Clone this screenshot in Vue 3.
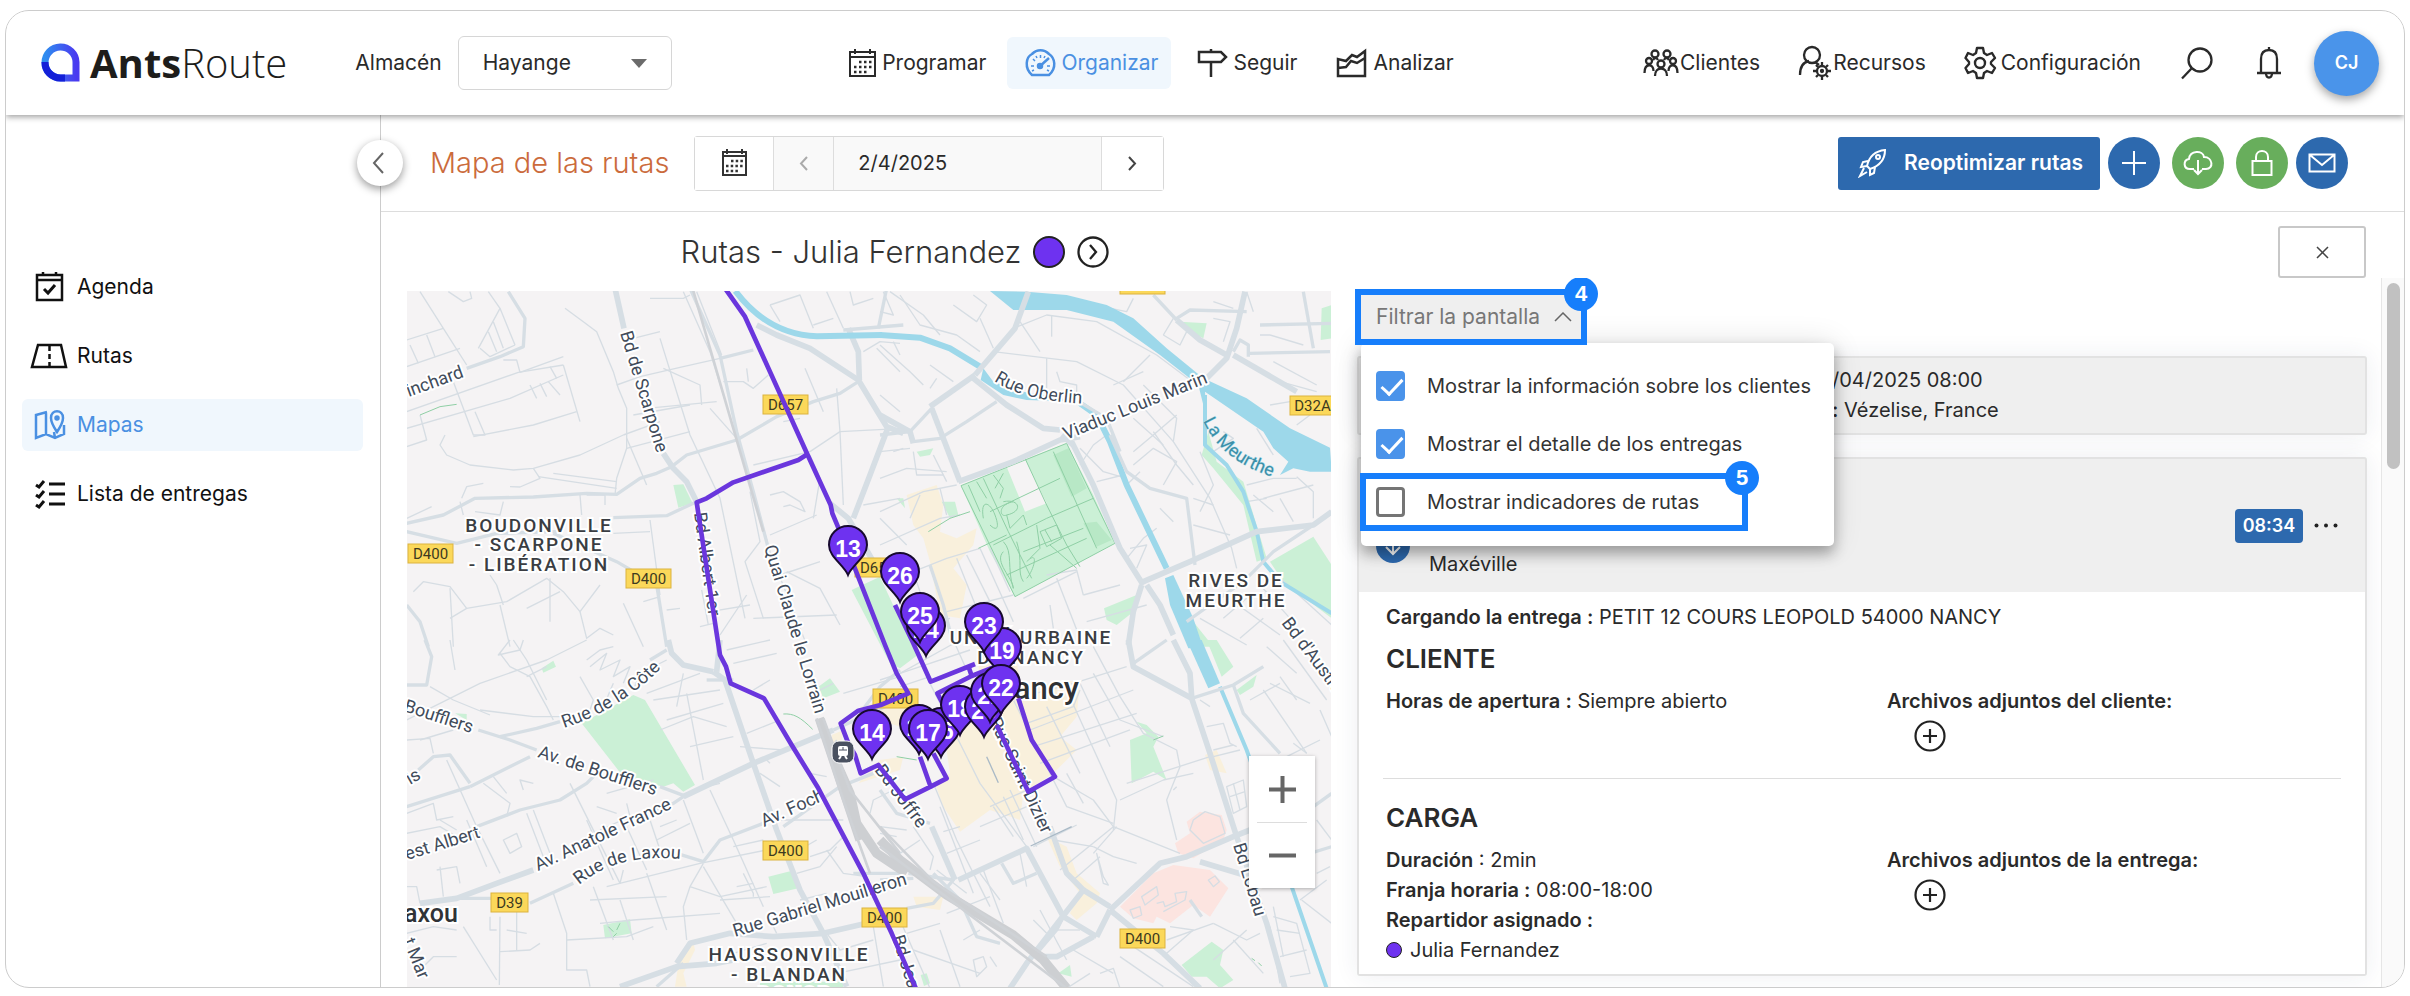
<script setup>
import { ref } from 'vue'

const depot = ref('Hayange')
const date = ref('2/4/2025')
const filters = ref([
  { id: 'f-clients', label: 'Mostrar la información sobre los clientes', on: true },
  { id: 'f-details', label: 'Mostrar el detalle de los entregas', on: true },
  { id: 'f-metrics', label: 'Mostrar indicadores de rutas', on: false, step: 5 },
])

// The base map is drawn in four sectors, each with its own origin, at three units per pixel.
const sectors = [
  {
    id: 'nw', at: 'translate(-21 -18)',
    major: [
      'M645 10 L672 130', 'M790 505 L820 550 L860 590 L890 650', 'M1070 120 L1130 150 L1230 190 L1375 285 L1460 425 L1510 445', 'M1465 425 L1410 570 L1360 700', 'M1290 655 L1345 700 L1420 830', 'M1345 130 L1375 200 L1378 285',
    ],
    mid: [
      'M870 10 L960 210 L1010 440 L1060 620 L1105 790', 'M20 715 L130 690 L225 640 L400 636 L560 625 L650 628 L720 580 L770 565 L815 545', 'M815 545 L860 510 L1010 465 L1130 395 L1240 350 L1320 325 L1375 290', 'M890 650 L800 692 L640 698', 'M20 740 L170 775 L290 745 L470 740', 'M200 250 L300 215 L370 185 L375 100 L325 20', 'M960 220 L1060 195', 'M460 745 L650 830 L770 900 L800 1085', 'M20 960 L60 1010 L85 1085', 'M1460 10 L1435 130', 'M1330 135 L1510 120',
    ],
    minor: [
      'M60 20 L130 130 L200 240', 'M20 165 L130 130', 'M20 245 L180 190', 'M145 20 L190 50 L215 40 L210 20', 'M30 180 L55 235', 'M80 150 L105 215', 'M235 190 L300 70 L265 20', 'M240 190 L270 215 L345 180', 'M265 140 L290 200', 'M280 110 L310 190', 'M300 70 L345 180', 'M310 225 L350 225 L360 262 L490 215', 'M490 240 L540 410', 'M20 485 L80 465 L60 390', 'M20 380 L355 262 L490 240', 'M20 430 L330 340 L490 270', 'M160 290 L220 450 L255 450 L225 380', 'M220 455 L400 420 L530 380', 'M390 300 L410 340', 'M420 295 L440 335', 'M445 290 L480 330', 'M450 245 L470 280', 'M135 450 L120 480 L140 510 L210 540 L340 555 L400 550 L540 510 L670 450', 'M495 70 L550 110 L590 140 L640 260 L655 310 L680 370 L680 490 L650 580 L645 630', 'M650 300 L720 275 L850 245 L960 220', 'M700 160 L780 140', 'M680 490 L870 440', 'M670 450 L780 410', 'M780 160 L870 450 L960 640 L1035 1000', 'M850 20 L930 200 L1060 620 L1110 800 L1220 1080', 'M890 20 L965 210', 'M740 370 L950 350', 'M700 390 L870 360', 'M790 250 L900 300 L905 360', 'M970 290 L1030 290 L1060 310 L1105 270', 'M1040 250 L1045 290', 'M930 370 L1010 460', 'M680 460 L740 600', 'M400 550 L420 580 L360 606 L330 605', 'M415 575 L650 610', 'M460 565 L650 590', 'M185 640 L200 605 L250 595', 'M180 650 L190 690', 'M310 650 L300 690 L225 680', 'M540 630 L545 690', 'M560 630 L615 630 L615 660', 'M20 700 L95 665', 'M640 745 L750 740', 'M750 705 L780 930', 'M40 920 L70 890 L150 905 L200 970 L150 1000', 'M200 970 L320 950 L440 880 L490 920 L540 980 L600 900', 'M150 910 L160 1085', 'M310 960 L290 900 L270 870', 'M450 880 L450 1010', 'M480 920 L380 970', 'M540 980 L560 1060 L600 1030 L640 1050', 'M300 960 L330 1085', 'M670 955 L730 1085', 'M730 950 L780 935', 'M800 975 L840 970', 'M900 1025 L940 1015', 'M905 915 L925 1020', 'M930 980 L1050 960', 'M960 1050 L1040 930', 'M1050 620 L1080 770 L1035 830 L1090 1000', 'M1110 750 L1250 690', 'M1140 870 L1260 830', 'M1160 860 L1260 910 L1320 1020', 'M1060 540 L1230 500', 'M1230 510 L1260 580 L1240 700', 'M1110 630 L1150 620 L1200 650 L1215 680 L1170 660 L1150 665', 'M1060 1000 L1310 990', 'M1230 500 L1320 440 L1510 430', 'M1320 440 L1310 310', 'M1320 440 L1330 660', 'M1150 410 L1200 400', 'M1215 250 L1270 380', 'M1110 60 L1200 30 L1240 130', 'M1110 60 L1140 110', 'M1280 20 L1330 130', 'M1240 120 L1300 100', 'M1350 20 L1360 60 L1420 40', 'M1390 200 L1440 170 L1500 175', 'M1430 190 L1500 260', 'M750 40 L850 40 L870 30', 'M1390 660 L1500 640', 'M1480 500 L1510 490',
    ],
    rail: ['M880 18 L1090 740'],
    green: ['M820 600 L850 598 L878 655 L835 668 Z'],
    park: ['M60 390 L120 365 L170 358'],
  },
  {
    id: 'ne', at: 'translate(1419 -18)',
    major: [
      'M445 20 L405 130 L285 270', 'M285 270 L150 365', 'M280 280 L380 360 L490 430 L540 435', 'M235 590 L400 530 L540 465 L600 455', 'M575 470 L640 600 L720 790 L790 900', 'M545 450 L580 480', 'M0 390 L90 440 L100 475', 'M155 370 L240 590', 'M960 300 L1040 220 L1070 130 L1095 20', 'M1040 210 L960 165 L890 105', 'M1060 210 L1250 320', 'M790 890 L930 830 L1130 740 L1300 720 L1355 680', 'M785 900 L760 980 L745 1080', 'M800 900 L840 960 L880 1050',
    ],
    mid: [
      'M100 470 L180 460 L260 410 L350 350', 'M890 105 L820 30', 'M90 440 L155 370', 'M0 450 L90 440', 'M890 100 L930 75 L1100 80', 'M1110 205 L1350 200', 'M690 450 L740 560 L810 610 L920 640 L945 840', 'M580 340 L680 400 L720 500', 'M1060 200 L1080 165 L1105 180 L1105 215', 'M1140 120 L1355 115', 'M1270 20 L1300 190', 'M150 840 L190 960 L220 1080', 'M1300 720 L1180 800 L1090 890 L990 960 L920 1010',
    ],
    minor: [
      'M0 80 L40 90 L10 20', 'M30 20 L130 90 L180 150', 'M60 30 L120 120 L230 150 L300 200', 'M220 60 L290 110 L320 60 L280 30', 'M300 100 L340 190', 'M400 130 L500 90 L650 110 L830 210 L950 300', 'M340 200 L590 230 L730 300 L880 470 L990 640 L1055 790 L1070 850', 'M480 200 L420 110', 'M500 220 L500 320', 'M530 260 L540 290 L590 300 L590 350', 'M515 90 L515 155', 'M730 290 L810 210', 'M700 300 L790 260', 'M760 400 L850 480', 'M150 240 L220 290', 'M170 280 L150 310', 'M0 330 L60 380', 'M40 170 L60 210', 'M0 180 L90 260 L130 300', 'M100 500 L110 570 L190 570', 'M160 510 L200 590', 'M0 500 L90 490', 'M0 580 L80 550 L200 560', 'M0 700 L80 780', 'M0 680 L130 620 L230 600', 'M0 780 L180 700 L240 690', 'M120 630 L90 700', 'M180 610 L200 690', 'M30 820 L100 860 L200 820 L300 790', 'M100 860 L140 980', 'M260 810 L330 950', 'M300 790 L400 1010', 'M230 820 L290 970', 'M330 790 L390 920', 'M200 980 L400 930', 'M180 1010 L210 1000', 'M600 490 L670 560 L740 580', 'M600 540 L640 480 L680 450', 'M650 590 L730 570', 'M760 540 L820 490 L890 530 L850 600', 'M740 600 L780 560', 'M890 390 L820 450 L760 500', 'M820 440 L890 540 L940 600', 'M790 300 L890 400 L880 470', 'M960 500 L1000 600 L960 680', 'M840 670 L880 710', 'M750 790 L800 780 L770 850', 'M740 820 L790 760 L830 730', 'M940 640 L1000 660', 'M940 720 L1050 750', 'M500 870 L590 855 L610 930', 'M530 880 L600 1060', 'M610 930 L720 900', 'M430 940 L590 860', 'M510 960 L520 1030', 'M620 1010 L800 960', 'M850 150 L900 180 L920 140', 'M850 150 L880 100', 'M1000 100 L1050 110 L1030 170', 'M1100 20 L1120 80', 'M1140 150 L1170 150 L1270 180', 'M1180 230 L1310 300', 'M1200 290 L1310 320', 'M1170 360 L1230 350', 'M1250 420 L1290 390', 'M1100 600 L1180 580 L1250 580', 'M1250 575 L1300 620 L1300 700', 'M1120 630 L1180 680', 'M1150 640 L1300 600', 'M1200 640 L1240 710', 'M1100 650 L1160 640', 'M1000 500 L1060 460 L1030 440', 'M1130 430 L1180 510', 'M960 1000 L1100 1080', 'M1030 1000 L1100 940', 'M1060 950 L1200 1050', 'M1140 900 L1230 1000', 'M1190 870 L1355 1020', 'M1080 1060 L1150 1000', 'M640 60 L740 80 L760 40', 'M1000 50 L1060 70',
    ],
    water: ['M0 150 L120 158 L210 190 L300 245', 'M600 355 L650 390 L690 470 L740 600 L860 850'],
    stream: ['M975 330 L975 480 L1040 540 L1090 620 L1130 740 L1150 830 L1200 890 L1355 985'],
    waterFill: [
      'M330 18 L440 20 L560 30 L680 60 L760 100 L860 190 L970 280 L1100 340 L1230 430 L1350 488 L1355 560 L1290 560 L1240 550 L1200 570 L1225 530 L1180 490 L1150 440 L975 320 L980 400 L955 300 L840 210 L700 110 L560 75 L400 75 Z',
      'M310 250 L340 290 L430 320 L600 350 L440 345 L370 330 L302 285 Z',
      'M855 880 L880 870 L940 1000 L970 1090 L925 1090 L870 960 Z',
    ],
    green: [
      'M243 602 L380 545 L560 475 L640 630 L705 775 L405 935 L330 800 Z', 'M900 110 L980 115 L970 160 L920 135 Z', 'M1325 70 L1355 60 L1355 160 L1322 165 Z', 'M985 440 L1010 530 L1090 590 L1160 820 L1130 830 L1090 660 L1000 550 L965 510 Z', 'M1170 830 L1300 755 L1355 840 L1355 1000 L1210 890 Z', 'M672 970 L770 930 L760 980 L710 1020 L680 1005 Z', 'M185 650 L225 650 L235 690 L210 700 Z', 'M110 500 L160 490 L150 510 L120 515 Z', 'M50 640 L70 640 L75 670 Z', 'M940 1010 L1000 1085 L960 1085 Z',
    ],
    darkGreen: ['M520 510 L565 490 L620 610 L575 635 Z', 'M610 715 L650 710 L695 765 L650 785 Z'],
    clear: ['M380 545 L435 522 L500 655 L435 680 Z'],
    park: ['M310 580 L385 740 L455 880', 'M435 520 L500 660 L560 780 L600 845', 'M520 500 L650 790', 'M330 680 L540 580', 'M340 780 L500 700 L640 640', 'M430 800 L610 730', 'M380 870 L620 760', 'M450 820 L480 790 L470 720', 'M480 740 L530 720 L545 760 L500 785 Z', 'M495 735 L515 770', 'M310 700 C300 640 330 650 345 690 S350 740 330 720', 'M370 650 C420 640 430 680 380 690 C360 700 350 660 400 650', 'M340 570 L370 610 L360 640', 'M370 565 L345 610', 'M380 690 L390 730 L430 690 L440 720', 'M265 600 L300 680', 'M290 590 L320 640', 'M370 770 C400 800 380 850 400 910', 'M370 800 C340 830 400 880 400 910', 'M410 770 C430 830 410 860 430 890', 'M440 830 C480 790 460 860 440 880', 'M510 780 L590 850', 'M243 602 L560 475 L705 775 L405 935 Z', 'M145 740 L210 700 L270 680', 'M295 790 L380 750'],
    beige: ['M80 630 L170 600 L190 660 L180 740 L230 760 L290 730 L280 780 L220 850 L260 900 L240 1000 L180 990 L150 830 L130 760 L100 720 Z'],
  },
  {
    id: 'sw', at: 'translate(-21 1047)',
    major: [
      'M940 95 L975 120 L1060 370 L1130 570 L1200 750 L1270 880 L1340 1040', 'M805 0 L815 40 L850 75 L940 95', 'M850 470 L1060 370 L1180 320 L1300 270', 'M60 790 L170 775 L290 730 L400 690', 'M660 1040 L830 980 L950 970 L1000 960', 'M830 970 L870 910 L990 880 L1120 890 L1270 880 L1400 850', 'M960 0 L950 95',
    ],
    mid: [
      'M1150 560 L1320 440 L1420 400', 'M235 270 L330 300 L410 330', 'M780 440 L860 470', 'M20 135 L80 135 L95 50 L75 0', 'M300 290 L410 265 L480 245', 'M55 390 L100 350 L150 345 L210 430', 'M210 440 L390 350', 'M20 500 L210 440', 'M230 560 L360 510 L480 480 L560 430 L590 400', 'M390 790 L520 730', 'M830 640 L910 665 L960 600 L1090 550', 'M170 775 L280 775', 'M1360 700 L1500 700', 'M920 120 L1000 120', 'M770 1040 L850 970', 'M750 60 L800 30', 'M1300 270 L1500 180', 'M1380 220 L1440 140 L1500 90', 'M850 470 L820 490 L670 540',
    ],
    minor: [
      'M150 0 L165 90', 'M330 0 L295 45 L360 30 L370 0', 'M300 40 L330 80 L390 110 L440 200 L460 240', 'M90 140 L160 180 L270 225', 'M20 240 L120 190 L240 130 L440 60 L560 0', 'M380 110 L440 80', 'M240 210 L400 230 L480 230', 'M20 300 L90 295 L100 340', 'M60 300 L160 270', 'M340 0 L380 60 L440 180', 'M560 60 L600 30 L640 20 M570 80 L620 40 L600 90 L660 60 L640 110 L690 80 L670 130', 'M540 110 L580 180 L560 240', 'M640 130 L610 200', 'M700 150 L720 100 L800 60', 'M740 160 L900 100', 'M760 180 L960 150', 'M860 160 L910 420', 'M850 100 L830 200', 'M800 240 L970 190', 'M780 270 L880 230 L980 260', 'M870 320 L1000 290', 'M980 30 L1110 0', 'M1000 70 L1130 40', 'M1060 150 L1110 120', 'M1040 280 L1140 240', 'M1020 320 L1150 330', 'M20 520 L100 490 L110 540 L160 530', 'M250 430 L330 490 L320 530', 'M280 410 L320 460', 'M370 450 L360 420 L400 430', 'M140 360 L230 560 L300 700', 'M200 540 L260 680', 'M310 600 L350 580 L365 620 L330 640 Z', 'M400 510 L450 640', 'M380 520 L430 650', 'M510 430 L660 730 L670 690', 'M560 540 L640 720', 'M590 500 L650 520', 'M620 460 L760 420', 'M600 570 L690 530 L680 490', 'M680 560 L740 690', 'M740 510 L790 660', 'M770 600 L870 550', 'M850 480 L910 640', 'M930 450 L1000 600', 'M920 440 L960 430', 'M780 560 L830 540', 'M1000 600 L1090 800', 'M1080 400 L1140 440', 'M1090 350 L1110 370', 'M20 740 L50 740 L60 790', 'M120 680 L130 770', 'M110 690 L170 680 L180 730', 'M20 580 L120 560 L170 590', 'M120 540 L170 570', 'M270 830 L270 870 L290 870', 'M300 830 L298 1035', 'M350 800 L350 930', 'M300 935 L390 930 L420 910', 'M320 870 L380 880', 'M190 860 L290 1020', 'M20 880 L100 860 L170 870', 'M50 1000 L100 950 L170 950', 'M460 760 L500 880 L500 990 L560 990 L570 1040', 'M580 740 L640 900', 'M570 780 L800 770', 'M600 850 L700 840 L960 820', 'M500 900 L680 890 L760 860', 'M660 780 L700 900', 'M740 700 L800 870', 'M620 740 L900 670 L1100 630', 'M910 670 L870 740 L850 800 L860 900', 'M870 740 L960 770 L1100 740', 'M910 680 L1010 850', 'M1000 620 L1090 600', 'M1030 700 L1060 760 L1060 770', 'M1010 740 L1060 730', 'M960 780 L1110 770', 'M1190 700 L1260 680 L1310 620', 'M1230 650 L1290 630 L1330 590', 'M1180 640 L1250 600', 'M1140 540 L1330 540', 'M1280 630 L1330 700 L1400 710', 'M1100 820 L1130 880', 'M1200 780 L1280 760', 'M1000 940 L1100 910', 'M1280 880 L1320 930 L1420 900', 'M1310 1000 L1500 960', 'M1420 860 L1450 1040', 'M1330 160 L1500 110', 'M1280 340 L1310 300', 'M1240 160 L1300 130', 'M1230 400 L1280 410', 'M1410 520 L1420 480 L1480 450', 'M1440 580 L1490 590',
    ],
    railWide: ['M1258 235 L1290 330 L1340 480 L1380 600', 'M1310 370 L1350 460 L1370 550 L1430 640 L1520 700'],
    rail: ['M1250 235 L1330 480 L1410 700', 'M1270 235 L1350 450 L1500 640'],
    green: ['M545 250 L700 165 L735 180 L885 435 L850 455 L820 430 L790 440 L670 410 Z', 'M425 85 L460 62 L468 80 L430 98 Z', 'M1255 140 L1290 115 L1320 155 L1270 175 Z', 'M1105 710 L1185 690 L1195 745 L1120 762 Z', 'M610 855 L690 838 L695 880 L615 895 Z', 'M165 220 L200 222 L200 240 Z', 'M1080 1025 L1330 1025 L1330 1045 L1080 1045 Z'],
    park: ['M625 860 L640 875', 'M660 850 L650 870', 'M640 890 L650 880', 'M1150 222 C1180 220 1200 230 1238 268'],
    beige: ['M1295 285 L1330 270 L1320 330 L1300 330 Z', 'M1375 430 L1500 390 L1510 350 L1440 360 Z', 'M840 940 L880 905 L885 930 L850 1000 L860 1040 L825 1040 Z', 'M1380 200 L1450 180 L1520 200 L1500 260 L1440 240 Z'],
  },
  {
    id: 'se', at: 'translate(1419 1047)',
    major: [
      'M745 0 L760 80 L935 175 L990 340 L1070 590 L1160 850 L1215 1045', 'M880 0 L930 100 L935 170', 'M690 810 L840 670 L920 650 L1060 590 L1110 570', 'M690 810 L850 940 L960 1045', 'M960 665 L1110 710', 'M235 720 L440 625 L480 700 L550 830 L650 890', 'M225 720 L155 560', 'M610 750 L690 800', 'M510 560 L560 700 L610 750', 'M650 890 L690 810', 'M610 750 L540 840 L440 970 L390 1045', 'M640 890 L530 950 L480 950',
    ],
    mid: [
      'M760 70 L860 0', 'M935 175 L1060 135 L1150 80', 'M1060 135 L1090 220 L1200 340', 'M85 700 L220 720 L160 790 L80 805', 'M0 720 L100 715', 'M365 670 L400 730 L470 700', 'M1300 500 L1355 460', 'M1290 640 L1355 620', 'M0 450 L50 520 L150 550', 'M550 830 L530 870 L470 940', 'M360 910 L290 890 L240 780 L160 700', 'M930 780 L965 830',
    ],
    minor: [
      'M460 620 L590 555', 'M60 100 L270 30', 'M60 140 L150 110', 'M0 120 L60 100 L240 0', 'M150 130 L300 430 L440 620', 'M160 430 L230 600 L330 800', 'M180 500 L280 760', 'M430 170 L580 130 L740 80', 'M440 250 L580 200 L600 150', 'M400 180 L560 500 L700 550', 'M500 200 L600 400', 'M560 150 L710 480 L700 570', 'M600 130 L690 320', 'M640 100 L720 240 L850 290', 'M450 270 L760 150', 'M460 320 L770 220', 'M480 370 L750 270', 'M520 410 L640 480 L700 560 L900 640', 'M640 20 L720 170 L790 280 L890 330 L900 380 L860 480 L890 600', 'M740 430 L990 350', 'M560 400 L610 490', 'M330 500 L530 410', 'M340 500 L400 590', 'M370 470 L430 600', 'M390 450 L470 620', 'M300 560 L440 500', 'M190 575 L240 560', 'M200 640 L300 600', 'M720 480 L850 420 L940 400', 'M640 640 L710 560', 'M640 620 L700 650 L770 670', 'M650 640 L670 710 L685 735 L670 730 Z', 'M540 690 L700 560', 'M520 600 L640 620', 'M580 720 L660 650', 'M960 180 L990 200', 'M980 260 L1030 250 L1050 310 L1070 320', 'M1000 330 L1060 315', 'M1000 350 L1080 330', 'M1040 440 L1090 420 L1100 500 L1060 520 Z', 'M1060 430 L1080 510', 'M1050 470 L1095 455', 'M1170 130 L1290 190', 'M1200 110 L1250 180', 'M1210 0 L1340 180', 'M1160 20 L1250 100', 'M1150 150 L1280 340', 'M1110 180 L1200 130', 'M1220 350 L1320 300', 'M1240 310 L1280 340', 'M1320 210 L1355 290', 'M1310 540 L1355 600', 'M1310 700 L1350 680', 'M1265 780 L1355 850', 'M1260 780 L1340 720', 'M1180 830 L1250 850 L1290 1000 L1230 1010', 'M1170 860 L1200 1030', 'M1190 870 L1260 880', 'M1180 800 L1210 950', 'M1200 950 L1280 930', 'M1000 850 L1100 900 L1140 880', 'M1060 900 L1150 1000', 'M1000 960 L1100 870', 'M860 900 L1000 850', 'M870 860 L940 870 L860 940', 'M760 920 L940 1040', 'M720 950 L850 1040', 'M660 1000 L700 985 L720 1045', 'M630 1000 L560 1045', 'M280 960 L310 950 L320 980 L290 1010 Z', 'M350 980 L330 950', 'M180 870 L240 1040', 'M80 880 L180 850', 'M100 930 L300 1000', 'M60 840 L150 1045', 'M200 820 L330 770', 'M250 900 L300 870', 'M360 780 L300 700', 'M420 640 L440 740', 'M530 870 L600 870', 'M460 840 L500 880', 'M480 810 L560 960', 'M580 930 L700 1000', 'M100 560 L160 650 L150 690', 'M60 640 L120 600', 'M170 690 L260 760', 'M0 560 L80 570', 'M890 440 L880 450', 'M310 690 L370 850', 'M220 0 L260 90',
    ],
    railWide: ['M0 600 L60 660 L200 765 L400 885 L490 960 L560 1045'],
    rail: ['M0 620 L560 1045', 'M0 560 L160 725 L500 950'],
    stream: ['M1020 140 L1100 330 L1160 500 L1235 740 L1340 1045'],
    waterFill: ['M920 0 L965 0 L1020 130 L985 145 Z'],
    green: ['M-85 -150 L0 -190 L60 -60 L120 40 L60 85 L30 70 Z', 'M750 300 L800 280 L770 245 L800 255 L835 290 L820 320 L860 420 L820 395 L755 430 Z', 'M905 975 L995 905 L1030 930 L1020 975 L1060 1020 L1020 1045 L980 1010 L935 1010 Z', 'M1070 150 L1130 105 L1120 140 L1080 165 Z', 'M980 0 L1010 0 L1060 80 L1025 110 Z', 'M535 1000 L570 975 L575 1010 Z', 'M122 1005 L140 1000 L150 1030 L132 1038 Z'],
    park: ['M820 300 L850 288', 'M1115 955 L1125 962', 'M1135 968 L1145 978', 'M50 350 L110 360'],
    beige: ['M180 200 L430 140 L600 120 L590 230 L540 290 L590 330 L520 400 L430 460 L420 540 L330 510 L240 575 L190 500 L165 430 L210 400 Z', 'M290 20 L400 0 L420 130 L300 120 Z', 'M500 590 L560 620 L590 700 L660 760 L650 790 L590 840 L570 820 L600 760 L540 680 Z', 'M975 345 L1010 330 L1040 400 L990 390 Z', 'M100 770 L190 770 L180 810 L110 800 Z'],
    pink: ['M885 610 L930 580 L920 545 L960 515 L1025 525 L1040 570 L1030 600 L940 655 L895 640 Z', 'M720 800 L820 700 L880 675 L990 690 L1045 745 L990 830 L940 795 L870 850 L830 830 L820 850 L760 835 Z'],
    buildings: ['M940 540 L975 515 L1020 530 L1035 580 L970 610 L930 570 Z', 'M785 770 L830 740 L835 765 L795 795 Z', 'M750 810 L780 800 L785 825 L760 835 Z', 'M830 790 L850 785 L855 800 L890 785 L885 760 L920 755 L915 780 L850 815', 'M985 720 L1005 708 L1018 725 L1000 740 Z'],
    accents: ['M452 618 L575 560', 'M320 350 L355 428'],
  },
]

const routes = [
  { at: 'translate(-21 -18)', d: 'M975 10 L1035 95 L1222 508 L1292 660 L1297 685 L1345 800 L1455 1080 L1490 1165 L1525 1225 L1442 1260 L1375 1277 L1322 1315 L1345 1375 L1365 1410 L1382 1465 L1435 1440 L1515 1543 L1592 1505 L1560 1415' },
  { at: 'translate(-21 -18)', d: 'M1222 508 L1195 525 L1000 592 L920 640 L890 652 L953 1065 L960 1110 L978 1145 L992 1195 L1092 1240 L1175 1380 L1255 1510 L1390 1765 L1475 1945 L1552 2120' },
  { at: 'translate(1419 1047)', d: 'M45 -105 L100 10 L118 50 L152 125 L285 72' },
  { at: 'translate(1419 1047)', d: 'M265 78 L275 108 L172 160 L188 190 M275 108 L340 82' },
  { at: 'translate(1419 1047)', d: 'M152 440 L200 415 L160 340' },
  { at: 'translate(1419 1047)', d: 'M350 255 L445 455 L525 410 L455 300 L415 175' },
]

const streets = [
  { t: 'Pinchard', x: -9, y: 110, r: -20 },
  { t: 'Bd de Scarpone', x: 213, y: 42, r: 73 },
  { t: 'Bd Albert 1er', x: 287, y: 222, r: 82 },
  { t: 'Quai Claude le Lorrain', x: 357, y: 256, r: 73 },
  { t: 'Viaduc Louis Marin', x: 659, y: 149, r: -22 },
  { t: "Bd d'Austrasie", x: 874, y: 332, r: 53 },
  { t: 'Boufflers', x: -4, y: 420, r: 18 },
  { t: 'Av. de Boufflers', x: 130, y: 466, r: 18 },
  { t: 'Av. Anatole France', x: 131, y: 580, r: -25 },
  { t: 'est Albert', x: 0, y: 569, r: -17 },
  { t: 'Av. Foch', x: 357, y: 536, r: -24 },
  { t: 'is', x: 3, y: 494, r: -30 },
  { t: 'Rue Gabriel Mouilleron', x: 328, y: 646, r: -17 },
  { t: 'Rue Saint Dizier', x: 582, y: 430, r: 65 },
  { t: 'Bd Joffre', x: 467, y: 479, r: 53 },
  { t: 'Bd Lobau', x: 826, y: 554, r: 73 },
  { t: 'Bd Jean', x: 485, y: 646, r: 73 },
  { t: 't Mar', x: -4, y: 650, r: 68 },
]
const curved = [
  { id: 'c-oberlin', t: 'Rue Oberlin', d: 'M587 90 Q620 112 690 113' },
  { id: 'c-cote', t: 'Rue de la Côte', d: 'M157 437 Q222 416 268 362' },
  { id: 'c-laxou', t: 'Rue de Laxou', d: 'M172 594 Q215 558 290 570' },
  { id: 'c-meurthe', t: 'La Meurthe', d: 'M796 130 Q818 178 890 192', water: true },
]
const districts = [
  { t: 'BOUDONVILLE', x: 132, y: 241 }, { t: '- SCARPONE', x: 132, y: 260 }, { t: '- LIBÉRATION', x: 132, y: 280 },
  { t: 'RIVES DE', x: 829, y: 296 }, { t: 'MEURTHE', x: 829, y: 316 },
  { t: 'UNITÉ URBAINE', x: 624, y: 353 }, { t: 'DE NANCY', x: 624, y: 373 },
  { t: 'HAUSSONVILLE', x: 382, y: 670 }, { t: '- BLANDAN', x: 382, y: 690 }, { t: 'DONOP', x: 388, y: 709 },
]
const shields = [
  { t: 'D657', x: 356, y: 104 }, { t: 'D400', x: 1, y: 253 }, { t: 'D400', x: 219, y: 278 }, { t: 'D650', x: 448, y: 267 },
  { t: 'D32A', x: 883, y: 105 }, { t: 'D400', x: 713, y: -16 }, { t: 'D400', x: 356, y: 550 }, { t: 'D39', x: 84, y: 602, w: 37 },
  { t: 'D400', x: 455, y: 617 }, { t: 'D400', x: 466, y: 398 }, { t: 'D400', x: 713, y: 638 },
]
const pins = [
  [24, 519, 335], [13, 441, 254], [26, 493, 281], [25, 513, 321], [19, 595, 356], [23, 577, 331], [16, 534, 436],
  [15, 512, 433], [17, 521, 438], [18, 553, 414], [20, 577, 416], [21, 583, 401], [22, 594, 393], [14, 465, 438],
]
</script>

<template>
  <div class="frame">
    <header class="topbar">
      <div class="group brand-group">
        <a class="brand" href="#">
          <svg width="40" height="40" viewBox="0 0 40 40" aria-hidden="true">
            <defs>
              <linearGradient id="lg" x1="0" y1="0" x2="1" y2="0"><stop offset="0" stop-color="#2f8df0" /><stop offset="1" stop-color="#4a3af0" /></linearGradient>
            </defs>
            <path d="M35 35 V19 A15.5 15.5 0 1 0 19.500 35 Z" fill="none" stroke="url(#lg)" stroke-width="7" />
            <path d="M4 19 A15.500 15.500 0 0 0 19.500 35 H24" fill="none" stroke="#1420d8" stroke-width="7" />
          </svg>
          <span class="wordmark"><b>Ants</b>Route</span>
        </a>
        <label class="depot-label" for="depot">Almacén</label>
        <span class="select-wrap">
          <select id="depot" v-model="depot"><option>Hayange</option></select>
          <svg class="caret" width="16" height="9" viewBox="0 0 16 9" aria-hidden="true"><path d="M0 0 H16 L8 9 Z" fill="#6b6b6b" /></svg>
        </span>
      </div>

      <nav class="group nav">
        <a href="#" class="nav-item">
          <svg width="29" height="30" viewBox="0 0 29 30" fill="none" stroke="currentColor" stroke-width="2"><path d="M2 4 H27 V28 H2 Z M2 9 H27 M7 1 V6 M22 1 V6" /><path d="M11 14 H24 M6 19 H24 M6 24 H20" stroke-width="2.500" stroke-dasharray="2.500 2.500" /></svg>Programar
        </a>
        <a href="#" class="nav-item active">
          <svg width="31" height="28" viewBox="0 0 31 28" fill="none" stroke="currentColor" stroke-width="2.500"><path d="M7 26 C-1 19 1 8 7 5 C12 0 19 0 24 5 C30 9 32 19 24 26 Z" /><path d="M6 17 H9 M8 10 L10 12 M15.500 6 V9 M22 17 H25 M20 7 L19 9 M11 7 L12 9 M7 22 L9 21 M24 22 L22 21" stroke-width="1.500" /><path d="M14 18 L24 9" /><circle cx="15" cy="17" r="2" /></svg>Organizar
        </a>
        <a href="#" class="nav-item">
          <svg width="31" height="30" viewBox="0 0 31 30" fill="none" stroke="currentColor" stroke-width="2.500"><path d="M2 4 H24 L29 9 L24 14 H2 Z M14 1 V4 M14 14 V29" /></svg>Seguir
        </a>
        <a href="#" class="nav-item">
          <svg width="32" height="30" viewBox="0 0 32 30" fill="none" stroke="currentColor" stroke-width="2.500"><path d="M2 28 V11 L10 13 L16 7 L21 9 L29 3 V28 Z M2 20 L10 19 L15 13 L21 15 L29 10" /></svg>Analizar
        </a>
      </nav>

      <div class="group tools">
        <a href="#" class="nav-item">
          <svg width="36" height="28" viewBox="0 0 36 28" fill="none" stroke="currentColor" stroke-width="2.300"><circle cx="12" cy="5" r="3.500" /><circle cx="24" cy="5" r="3.500" /><circle cx="6" cy="12" r="3" /><circle cx="30" cy="12" r="3" /><circle cx="18" cy="15" r="3.500" /><path d="M1.500 24 C1.500 14 10.500 14 10.500 22 M25.500 22 C25.500 14 34.500 14 34.500 24 M12 27 C12 17 24 17 24 27 M10 11 C12 8 14 9 15 11 M26 11 C24 8 22 9 21 11" /></svg>Clientes
        </a>
        <a href="#" class="nav-item">
          <svg width="34" height="36" viewBox="0 0 34 36" fill="none" stroke="currentColor" stroke-width="2.300"><circle cx="14" cy="10" r="8" /><path d="M2 30 C2 21 6 17 11 16 M17 17 L21 20" /><circle cx="24" cy="26" r="5" /><circle cx="24" cy="26" r="1" /><path d="M24 17 V21 M24 31 V35 M15 26 H19 M29 26 H33 M18 20 L20 22 M28 30 L30 32 M30 20 L28 22 M20 30 L18 32" /></svg>Recursos
        </a>
        <a href="#" class="nav-item">
          <svg width="36" height="34" viewBox="0 0 36 34" fill="none" stroke="currentColor" stroke-width="2.400" stroke-linejoin="round"><path d="M13 2 H19 L20 7 L23 9 L28 7 L31 12 L27 16 V18 L31 22 L28 27 L23 25 L20 27 L19 32 H13 L12 27 L9 25 L4 27 L1.500 22 L5 18 V16 L1.500 12 L4 7 L9 9 L12 7 Z" /><circle cx="16" cy="17" r="5" /></svg>Configuración
        </a>
        <button class="bare search" aria-label="Buscar">
          <svg width="33" height="33" viewBox="0 0 33 33" fill="none" stroke="currentColor" stroke-width="2.300"><circle cx="19" cy="13" r="11.500" /><path d="M11 21 L1 31.500" /></svg>
        </button>
        <button class="bare bell" aria-label="Avisos">
          <svg width="26" height="34" viewBox="0 0 26 34" fill="none" stroke="currentColor" stroke-width="2.300"><path d="M5 26 V13 C5 7 8 4 13 4 C18 4 21 7 21 13 V26 M1 27 H25 M13 1 V4 M10 27 C10 33 16 33 16 27" /></svg>
        </button>
        <button class="avatar">CJ</button>
      </div>
    </header>

    <div class="shell">
      <aside class="side">
        <a href="#" class="side-item">
          <svg width="38" height="32" viewBox="0 0 38 32" fill="none" stroke="currentColor" stroke-width="2.500"><path d="M7 4 H32 V29 H7 Z M7 9 H32 M13 1 V5 M26 1 V5" /><path d="M14 18 L18 22 L25 14" stroke-width="3" /></svg>Agenda
        </a>
        <a href="#" class="side-item">
          <svg width="38" height="32" viewBox="0 0 38 32" fill="none" stroke="currentColor" stroke-width="2.500"><path d="M8 5 H31 L36 27 H2 Z" /><path d="M19.500 6 V27" stroke-dasharray="5 3" /></svg>Rutas
        </a>
        <a href="#" class="side-item active">
          <svg width="38" height="32" viewBox="0 0 38 32" fill="none" stroke="currentColor" stroke-width="2.500"><path d="M17 3 L6 6 V29 L16 25 L25 29 L34 25 V16 M16 4 V25 M27 23 C23 17 21 13 21 9 C21 0 33 0 33 9 C33 13 31 17 27 23 Z M24 23 L25 29" /><circle cx="27" cy="9" r="1.500" fill="currentColor" /></svg>Mapas
        </a>
        <a href="#" class="side-item">
          <svg width="38" height="32" viewBox="0 0 38 32" fill="none" stroke="currentColor" stroke-width="3"><path d="M19 6 H35 M19 16 H35 M19 26 H35" /><path d="M6 7 L9 9 L14 3 M6 17 L9 19 L14 13 M6 27 L9 29 L14 23" /></svg>Lista de entregas
        </a>
      </aside>

      <main class="main">
        <div class="subbar">
          <button class="collapse" aria-label="Plegar">
            <svg width="12" height="22" viewBox="0 0 12 22" fill="none" stroke="#666" stroke-width="2"><path d="M11 1 L2 11 L11 21" /></svg>
          </button>
          <h1>Mapa de las rutas</h1>
          <div class="datebar">
            <button class="cal" aria-label="Calendario">
              <svg width="27" height="30" viewBox="0 0 27 30" fill="none" stroke="#333" stroke-width="2"><path d="M2 4 H25 V27 H2 Z M2 8 H25 M6 1 V6 M21 1 V6" /><path d="M10 13 H22 M5 18 H22 M5 23 H18" stroke-width="2.500" stroke-dasharray="2.500 2.200" /></svg>
            </button>
            <button class="prev" aria-label="Anterior"><svg width="9" height="15" viewBox="0 0 9 15" fill="none" stroke="#aaa" stroke-width="2"><path d="M8 1 L2 7.500 L8 14" /></svg></button>
            <input v-model="date" aria-label="Fecha" />
            <button class="next" aria-label="Siguiente"><svg width="9" height="15" viewBox="0 0 9 15" fill="none" stroke="#444" stroke-width="2"><path d="M1 1 L7 7.500 L1 14" /></svg></button>
          </div>
          <div class="actions">
            <button class="reopt">
              <svg width="30" height="30" viewBox="0 0 30 30" fill="none" stroke="#fff" stroke-width="2"><path d="M9 18 C11 9 17 3 27 2 C27 12 21 18 12 21 Z M10 13 L5 14 L3 19 L9 18 M17 19 L16 25 L12 27 L12 21 M6 20 L2 28 L9 24" /><circle cx="20" cy="9" r="2" /></svg>
              Reoptimizar rutas
            </button>
            <button class="round blue" aria-label="Añadir"><svg width="24" height="24" viewBox="0 0 24 24" stroke="#fff" stroke-width="2"><path d="M12 0 V24 M0 12 H24" /></svg></button>
            <button class="round green" aria-label="Exportar"><svg width="30" height="26" viewBox="0 0 30 26" fill="none" stroke="#fff" stroke-width="2"><path d="M11 19 H7 C0 19 0 10 6 9 C7 0 20 0 21 7 C30 7 31 19 23 19 H19 M15 10 V24 M11 20 L15 24 L19 20" /></svg></button>
            <button class="round green" aria-label="Bloquear"><svg width="22" height="28" viewBox="0 0 22 28" fill="none" stroke="#fff" stroke-width="2"><path d="M1.500 12 H20.500 V26 H1.500 Z M5 12 V8 C5 0 17 0 17 8 V12" /></svg></button>
            <button class="round blue last" aria-label="Enviar"><svg width="28" height="20" viewBox="0 0 28 20" fill="none" stroke="#fff" stroke-width="2"><path d="M1.500 1.500 H26.500 V18.500 H1.500 Z M2 2 L14 12 L26 2" /></svg></button>
          </div>
        </div>

        <div class="work">
          <section class="map-col">
            <div class="map-title">
              <h2>Rutas - Julia Fernandez</h2>
              <i class="big-dot"></i>
              <button class="bare" aria-label="Ruta siguiente">
                <svg width="32" height="32" viewBox="0 0 32 32" fill="none" stroke="#222" stroke-width="2.300"><circle cx="16" cy="16" r="14.500" /><path d="M13 9 L19 16 L13 23" /></svg>
              </button>
            </div>
            <div class="map">
              <svg class="canvas" role="img" aria-label="Mapa de Nancy">
                <g transform="scale(0.333333)" fill="none" stroke-linejoin="round">
                  <g v-for="s in sectors" :key="s.id + 'a'" :transform="s.at">
                    <path v-for="d in s.beige" :key="d" :d="d" class="beige" />
                    <path v-for="d in s.pink" :key="d" :d="d" class="pink" />
                    <path v-for="d in s.green" :key="d" :d="d" class="park-fill" />
                    <path v-for="d in s.darkGreen" :key="d" :d="d" class="park-dark" />
                    <path v-for="d in s.clear" :key="d" :d="d" class="clear" />
                  </g>
                  <g v-for="s in sectors" :key="s.id + 'b'" :transform="s.at">
                    <path v-for="d in s.minor" :key="d" :d="d" class="minor" />
                    <path v-for="d in s.water" :key="d" :d="d" class="water-line" />
                    <path v-for="d in s.stream" :key="d" :d="d" class="stream" />
                    <path v-for="d in s.waterFill" :key="d" :d="d" class="water-fill" />
                    <path v-for="d in s.park" :key="d" :d="d" class="park-line" />
                    <path v-for="d in s.buildings" :key="d" :d="d" class="minor" />
                    <path v-for="d in s.mid" :key="d" :d="d" class="mid" />
                    <path v-for="d in s.major" :key="d" :d="d" class="major" />
                    <path v-for="d in s.railWide" :key="d" :d="d" class="rail-wide" />
                    <path v-for="d in s.rail" :key="d" :d="d" class="rail" />
                    <path v-for="d in s.accents" :key="d" :d="d" class="accent" />
                  </g>
                  <path d="M985 0 C1060 100 1150 133 1230 136 L1425 132" class="water-line" />
                </g>
                <g v-for="(s, i) in shields" :key="'sh' + i">
                  <rect :x="s.x" :y="s.y" :width="s.w || 45" height="19" class="shield" />
                  <text :x="s.x + (s.w || 45) / 2" :y="s.y + 15" class="shield-t">{{ s.t }}</text>
                </g>
                <text v-for="(s, i) in streets" :key="'st' + i" :transform="`translate(${s.x} ${s.y}) rotate(${s.r})`" class="street">{{ s.t }}</text>
                <g v-for="c in curved" :key="c.id">
                  <path :id="c.id" :d="c.d" fill="none" />
                  <text class="street" :class="{ river: c.water }"><textPath :href="'#' + c.id">{{ c.t }}</textPath></text>
                </g>
                <text v-for="(s, i) in districts" :key="'d' + i" :x="s.x" :y="s.y" class="district">{{ s.t }}</text>
                <text x="-3" y="631" class="town">axou</text>
                <text x="672" y="408" class="city">Nancy</text>
                <g transform="scale(0.333333)">
                  <path v-for="r in routes" :key="r.d" :d="r.d" :transform="r.at" class="route" />
                </g>
                <g transform="translate(436 461)">
                  <rect x="-11" y="-11" width="22" height="22" rx="7" fill="#4a5160" stroke="#fff" />
                  <rect x="-5" y="-6" width="10" height="10" rx="2" fill="#fff" />
                  <path d="M-4 -2 H4 M0 -5 V-2" stroke="#4a5160" /><path d="M-4 7 L-2 4 M4 7 L2 4" stroke="#fff" stroke-width="2" />
                </g>
                <g v-for="p in pins" :key="p[0]" :transform="`translate(${p[1]} ${p[2]})`">
                  <path d="M0 30 C-4 20 -19 12 -19 0 A19 19 0 0 1 19 0 C19 12 4 20 0 30 Z" class="pin" />
                  <text y="12" class="pin-t">{{ p[0] }}</text>
                </g>
              </svg>
              <div class="zoom">
                <button aria-label="Acercar"><svg width="27" height="27" viewBox="0 0 27 27" stroke="#666" stroke-width="4"><path d="M13.500 0 V27 M0 13.500 H27" /></svg></button>
                <button aria-label="Alejar"><svg width="27" height="27" viewBox="0 0 27 27" stroke="#666" stroke-width="4"><path d="M0 13.500 H27" /></svg></button>
              </div>
            </div>
          </section>

          <section class="panel">
            <div class="close-row">
              <button class="close" aria-label="Cerrar"><svg width="13" height="13" viewBox="0 0 13 13" stroke="#444" stroke-width="1.500"><path d="M1 1 L12 12 M12 1 L1 12" /></svg></button>
            </div>
            <div class="scroller">
              <div class="cards">
                <div class="filter">
                  <div class="mark filter-mark">
                    <button class="filter-btn">Filtrar la pantalla
                      <svg width="18" height="10" viewBox="0 0 18 10" fill="none" stroke="#666" stroke-width="1.500"><path d="M1 9 L9 1 L17 9" /></svg>
                    </button>
                    <span class="step">4</span>
                  </div>
                  <div class="menu">
                    <div v-for="f in filters" :key="f.id" class="option" :class="{ mark: f.step }">
                      <input :id="f.id" v-model="f.on" type="checkbox" />
                      <label :for="f.id">{{ f.label }}</label>
                      <span v-if="f.step" class="step">{{ f.step }}</span>
                    </div>
                  </div>
                </div>

                <div class="card start">
                  <p>/04/2025 08:00</p>
                  <p><b>:</b> Vézelise, France</p>
                </div>

                <article class="card stop">
                  <div class="stop-head">
                    <span class="stop-icon"><svg width="16" height="20" viewBox="0 0 16 20" fill="none" stroke="#fff" stroke-width="2"><path d="M8 0 V18 M1 11 L8 18 L15 11" /></svg></span>
                    <span class="town-name">Maxéville</span>
                    <span class="time">08:34</span>
                    <button class="bare more" aria-label="Más"><svg width="24" height="5" viewBox="0 0 24 5" fill="#222"><circle cx="2.500" cy="2.500" r="2" /><circle cx="12" cy="2.500" r="2" /><circle cx="21.500" cy="2.500" r="2" /></svg></button>
                  </div>
                  <div class="stop-body">
                    <p><b>Cargando la entrega :</b> PETIT 12 COURS LEOPOLD 54000 NANCY</p>
                    <h3>CLIENTE</h3>
                    <div class="cols client">
                      <p><b>Horas de apertura :</b> Siempre abierto</p>
                      <div>
                        <p><b>Archivos adjuntos del cliente:</b></p>
                        <button class="bare add" aria-label="Adjuntar al cliente"><svg width="32" height="32" viewBox="0 0 32 32" fill="none" stroke="#222" stroke-width="2.200"><circle cx="16" cy="16" r="14.500" /><path d="M16 9 V23 M9 16 H23" /></svg></button>
                      </div>
                    </div>
                    <hr />
                    <h3>CARGA</h3>
                    <div class="cols">
                      <div>
                        <p><b>Duración</b> : 2min</p>
                        <p><b>Franja horaria :</b> 08:00-18:00</p>
                        <p><b>Repartidor asignado :</b></p>
                        <p class="driver"><i class="dot"></i>Julia Fernandez</p>
                      </div>
                      <div>
                        <p><b>Archivos adjuntos de la entrega:</b></p>
                        <button class="bare add" aria-label="Adjuntar a la entrega"><svg width="32" height="32" viewBox="0 0 32 32" fill="none" stroke="#222" stroke-width="2.200"><circle cx="16" cy="16" r="14.500" /><path d="M16 9 V23 M9 16 H23" /></svg></button>
                      </div>
                    </div>
                  </div>
                </article>
              </div>
              <div class="track"><i class="thumb"></i></div>
            </div>
          </section>
        </div>
      </main>
    </div>
  </div>
</template>

<style>
body { background: #fff; }
</style>

<style scoped>
* { box-sizing: border-box; }
.frame {
  display: flex; flex-direction: column; height: calc(100vh - 18px); margin: 10px 5px 8px;
  border: 1px solid #ccc; border-radius: 24px; overflow: hidden;
  font: 400 20px/30px Inter, "Liberation Sans", sans-serif; color: #2a2a2a; background: #fff;
}
button, input, select { font: inherit; color: inherit; }
button { cursor: pointer; padding: 0; border: 0; }
a { color: inherit; text-decoration: none; }
p, h1, h2, h3 { margin: 0; }
b { font-weight: 600; }
svg { display: block; flex: none; }
.bare { background: none; }

.topbar {
  display: flex; justify-content: space-between; align-items: center; height: 104px; flex: none;
  padding: 0 25px 0 35px; position: relative; z-index: 3; background: #fff; box-shadow: 0 2px 6px rgba(0, 0, 0, .38);
  font-size: 21px;
}
.group { display: flex; align-items: center; white-space: nowrap; }
.brand { display: flex; align-items: center; gap: 9px; }
.wordmark { font: 300 40px/44px "Open Sans", sans-serif; color: #1d1d1b; }
.wordmark b { font-weight: 700; }
.depot-label { margin: 0 16px 0 68px; }
.select-wrap { position: relative; }
select { appearance: none; display: block; width: 214px; height: 54px; padding: 0 24px; border: 1px solid #d6d6d6; border-radius: 6px; background: #fff; }
.caret { position: absolute; right: 25px; top: 23px; pointer-events: none; }
.nav { gap: 8px; }
.nav-item { display: flex; align-items: center; gap: 5px; height: 52px; padding: 0 13px 0 18px; border-radius: 6px; }
.active { color: #4a90e2; background: #f0f7fd; }
.tools { gap: 8px; }
.tools .nav-item { gap: 1px; padding-right: 12px; }
.search { margin-left: 20px; }
.bell { margin: 0 24px 0 34px; }
.avatar { width: 65px; height: 65px; border-radius: 50%; background: #4a94ea; color: #fff; font-weight: 600; font-size: 18px; box-shadow: 0 4px 10px rgba(0, 0, 0, .35); }

.shell { display: flex; flex: 1; min-height: 0; }
.side { width: 375px; flex: none; border-right: 1px solid #ccc; padding: 146px 17px 0 16px; display: flex; flex-direction: column; gap: 17px; color: #111; font-size: 21px; }
.side-item { display: flex; align-items: center; gap: 9px; height: 52px; padding-left: 8px; border-radius: 6px; }
.side .active { color: #4a90e2; }
.main { flex: 1; min-width: 0; display: flex; flex-direction: column; }
.subbar { display: flex; align-items: center; height: 97px; flex: none; border-bottom: 1px solid #ddd; padding-right: 56px; }
.collapse { width: 46px; height: 46px; margin: 0 27px 0 -24px; border-radius: 50%; background: #fff; box-shadow: 0 3px 8px rgba(0, 0, 0, .4); display: grid; place-items: center; padding-right: 4px; }
h1 { font-weight: 300; font-size: 29px; line-height: 36px; color: #cb6b3c; white-space: nowrap; }
.datebar { display: flex; width: 470px; height: 55px; margin-left: 25px; border: 1px solid #d8d8d8; border-radius: 3px; }
.datebar button { display: grid; place-items: center; width: 61px; background: #fff; }
.datebar .cal { width: 78px; }
.datebar .prev { background: #f9f9f9; border: solid #ddd; border-width: 0 1px; }
.datebar input { flex: 1; min-width: 0; border: 0; background: #f9f9f9; padding: 0 24px; border-right: 1px solid #ddd; }
.actions { display: flex; align-items: center; margin-left: auto; }
.reopt { display: flex; align-items: center; gap: 16px; height: 53px; padding: 0 17px 0 20px; border-radius: 3px; background: #2d69ae; color: #fff; font-weight: 600; font-size: 21px; white-space: nowrap; }
.round { width: 52px; height: 52px; border-radius: 50%; display: grid; place-items: center; margin-left: 12px; }
.round.last, .reopt + .round { margin-left: 8px; }
.blue { background: #2d69ae; }
.green { background: #68ae5c; }

.work { flex: 1; min-height: 0; display: grid; grid-template-columns: 950fr 1073fr; }
.map-col { display: flex; flex-direction: column; padding-left: 26px; min-width: 0; }
.map-title { display: flex; align-items: center; justify-content: center; gap: 12px; height: 79px; flex: none; padding-left: 52px; }
h2 { font-weight: 300; font-size: 31px; line-height: 40px; color: #333; white-space: nowrap; }
.big-dot { width: 32px; height: 32px; border-radius: 50%; background: #6e32f0; border: 2px solid #222; }
.map { position: relative; flex: 1; min-height: 0; background: #f5f3f4; overflow: hidden; }
.canvas { position: absolute; inset: 0; width: 100%; height: 100%; }
.minor { stroke: #d6dde3; stroke-width: 4px; }
.mid { stroke: #d6dee4; stroke-width: 10px; }
.major { stroke: #d6dee4; stroke-width: 17px; }
.rail-wide { stroke: #cdcfd2; stroke-width: 28px; }
.rail { stroke: #cfd2d6; stroke-width: 8px; }
.water-line { stroke: #9dd8ea; stroke-width: 18px; }
.stream { stroke: #9dd8ea; stroke-width: 12px; }
.water-fill { fill: #9dd8ea; }
.park-fill { fill: #cbf0d6; }
.park-dark { fill: #b8e8c6; }
.clear { fill: #f5f3f4; }
.park-line { stroke: #8fcfa5; stroke-width: 3px; }
.beige { fill: #f9f0dc; }
.pink { fill: #fce4e0; }
.accent { stroke: #a9b9c6; stroke-width: 4px; }
.route { fill: none; stroke: #6a36dd; stroke-width: 14px; stroke-linejoin: round; }
.street { font: 400 18px/20px Roboto, sans-serif; fill: #414b5a; stroke: #fff; stroke-width: 4px; paint-order: stroke; stroke-linejoin: round; }
.river { fill: #3c8fa8; stroke: #b9e3ef; stroke-width: 1px; }
.district { font: 500 19px/20px Roboto, sans-serif; letter-spacing: 2px; text-anchor: middle; fill: #3a3d42; stroke: #fff; stroke-width: 4px; paint-order: stroke; }
.town, .city { font: 500 25px/28px Roboto, sans-serif; fill: #2f3236; stroke: #fff; stroke-width: 4px; paint-order: stroke; }
.city { font-size: 31px; text-anchor: end; }
.shield { fill: #fbd85a; stroke: #dcb33e; stroke-width: 1px; }
.shield-t { font: 400 15px/18px Roboto, sans-serif; text-anchor: middle; fill: #3d3a20; }
.pin { fill: #6e32f0; stroke: #17092f; stroke-width: 2px; }
.pin-t { font: 700 23px/24px "Liberation Sans", sans-serif; text-anchor: middle; fill: #fff; }
.zoom { position: absolute; right: 16px; bottom: 99px; width: 66px; background: #fff; box-shadow: 0 1px 4px rgba(0, 0, 0, .3); padding: 0 8px; }
.zoom button { display: grid; place-items: center; width: 100%; height: 66px; background: #fff; }
.zoom button + button { border-top: 1px solid #ddd; }

.panel { display: flex; flex-direction: column; min-width: 0; }
.close-row { display: flex; justify-content: flex-end; height: 66px; flex: none; padding: 14px 38px 0 0; }
.close { display: grid; place-items: center; width: 88px; height: 52px; background: #fff; border: 2px solid #c8c8c8; border-radius: 3px; }
.scroller { display: flex; flex: 1; min-height: 0; }
.cards { flex: 1; min-width: 0; padding: 11px 14px 0 24px; overflow: hidden; }
.track { width: 23px; border-left: 1px solid #e6e6e6; background: #fafafa; padding: 5px 0 0 5px; }
.thumb { display: block; width: 13px; height: 186px; border-radius: 7px; background: #c1c1c1; }
.filter { position: relative; z-index: 2; height: 67px; }
.mark { position: relative; border: 6px solid #167efb; }
.filter-mark { z-index: 1; width: 232px; height: 56px; background: #efefef; }
.filter-btn { display: flex; align-items: center; gap: 14px; width: 100%; height: 100%; padding-left: 15px; background: #efefef; color: #777; font-size: 21px; white-space: nowrap; }
.step { position: absolute; right: -17px; top: -18px; width: 34px; height: 34px; border-radius: 50%; background: #167efb; color: #fff; font: 700 22px/34px "Liberation Sans", sans-serif; text-align: center; }
.menu { position: absolute; left: 6px; top: 54px; min-width: 473px; padding: 14px 0 15px; background: #fff; border-radius: 5px; box-shadow: 0 8px 14px rgba(0, 0, 0, .3), 0 0 30px rgba(0, 0, 0, .12); white-space: nowrap; }
.option { display: flex; align-items: center; gap: 22px; height: 58px; padding: 0 14px 0 15px; color: #333; }
.option.mark { width: 388px; margin-left: -1px; padding-left: 10px; }
.option input { appearance: none; position: relative; width: 29px; height: 30px; margin: 0; border: 3px solid #757575; border-radius: 4px; flex: none; }
.option input:checked { background: #4a93ea; border-color: #4a93ea; }
.option input:checked::after { content: ""; position: absolute; left: 7px; top: 0; width: 9px; height: 18px; border: solid #fff; border-width: 0 3px 3px 0; transform: rotate(43deg); }
.card { margin-left: 2px; border: 2px solid #e2e2e2; border-radius: 3px; background: #efefef; box-shadow: 0 0 24px rgba(40, 50, 90, .08); }
.start { padding: 7px 0 9px 473px; height: 79px; margin-bottom: 22px; }
.stop-head { display: flex; align-items: center; height: 133px; padding: 0 23px 0 17px; }
.stop-icon { display: grid; place-items: center; width: 34px; height: 34px; border-radius: 50%; background: #2d69ae; margin: 40px 19px 0 0; }
.town-name { margin-top: 76px; }
.time { margin-left: auto; width: 68px; height: 34px; border-radius: 4px; background: #2d69ae; color: #fff; font-weight: 600; font-size: 18px; line-height: 34px; text-align: center; }
.more { padding: 0 4px 0 11px; }
.stop-body { background: #fff; padding: 10px 24px 9px 27px; }
.stop-body h3 { font-size: 26px; line-height: 36px; font-weight: 600; margin: 9px 0; }
.cols { display: grid; grid-template-columns: 501px 1fr; }
.client { height: 92px; }
.add { margin: 4px 0 0 27px; }
hr { border: 0; border-top: 1px solid #ddd; margin: 0 0 21px -3px; }
.driver { display: flex; align-items: center; gap: 8px; }
.dot { width: 16px; height: 16px; border-radius: 50%; background: #6e32f0; border: 1px solid #222; }
</style>
